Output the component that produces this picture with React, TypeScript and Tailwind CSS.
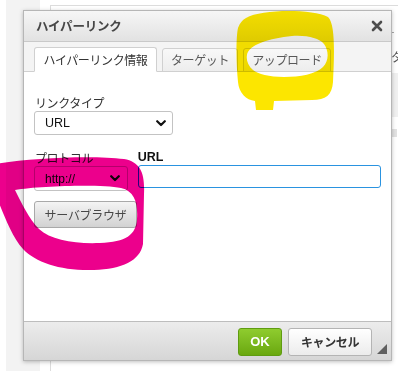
function Chevron() {
  return (
    <svg width="10" height="7" viewBox="0 0 10 7" className="shrink-0">
      <path d="M1.2 1.2 L5 5 L8.8 1.2" fill="none" stroke="#111" strokeWidth="2.2" strokeLinecap="round" strokeLinejoin="round" />
    </svg>
  );
}

function Annotations() {
  return (
    <svg
      width="398"
      height="371"
      viewBox="0 0 398 371"
      className="absolute left-0 top-0 pointer-events-none mix-blend-multiply"
    >
      {/* yellow loop round the upload tab */}
      <path
        fillRule="evenodd"
        fill="#fce600"
        d="M246 18 C262 9 312 9 328 17 C336 24 334 60 333 82 C332 95 326 100 312 100 L274 101 L273 110 L256 110 L255 101 C246 100 239 93 238 82 C236 64 236 36 238 28 C240 23 242 20 246 18 Z
           M247 55 C248 45 270 38 292 36 C307 35 319 38 324 44 C329 51 329 61 323 67 C316 74 300 77 284 77 C269 77 258 74 253 70 C248 66 246 60 247 55 Z"
      />
      {/* magenta loop round protocol / browse */}
      <path
        fillRule="evenodd"
        fill="#ec008c"
        d="M-4 164 C28 158 92 155 124 159 C141 162 145 174 144 194 L143 244 C140 261 122 269 94 270 C62 271 36 263 23 249 C11 236 3 212 -4 196 Z
           M15 190 C40 186 100 184 121 188 C135 191 138 204 137 219 C136 235 126 242 100 243 C74 244 51 240 39 229 C29 219 21 202 15 190 Z"
      />
    </svg>
  );
}

export default function App() {
  return (
    <div className="relative w-[398px] h-[371px] overflow-hidden bg-white" style={{ fontFamily: '"Noto Sans CJK JP", "Noto Sans", sans-serif' }}>
      {/* page behind the dialog */}
      <div className="flex h-full">
        <div className="w-[6px] bg-white" />
        <div className="w-[34px] bg-[#f3f3f3]" />
        <div className="flex-1 pl-[10px] pt-[5px]">
          <div className="h-full border-l border-t border-[#dcdcdc] flex justify-end">
            <div className="w-[7px] flex flex-col">
              <div className="h-[20px]" />
              <div className="text-[10px] leading-[10px] text-[#888]">-</div>
              <div className="mt-[14px] text-[12px] leading-[14px] text-[#555]">タ</div>
              <div className="mt-[9px] h-[44px] bg-[#f0f0f0]" />
              <div className="mt-[12px] w-[6px] h-[8px] bg-[#e2e2e2]" />
            </div>
          </div>
        </div>
      </div>

      {/* dialog */}
      <div className="absolute left-[23px] top-[10px] w-[369px] h-[351px] flex flex-col border border-[#b6b6b6] bg-white shadow-[0_1px_4px_rgba(0,0,0,0.25)]">
        <div className="h-[31px] shrink-0 flex items-center justify-between pl-[12px] pr-[8px] bg-gradient-to-b from-[#f6f6f6] to-[#e2e2e2] border-b border-[#c9c9c9]">
          <span className="text-[12.5px] font-bold text-[#474747] tracking-[-0.2px]">ハイパーリンク</span>
          <svg width="12" height="12" viewBox="0 0 12 12">
            <path d="M2 2 L10 10 M10 2 L2 10" stroke="#4d4d4d" strokeWidth="2.6" strokeLinecap="round" />
          </svg>
        </div>

        <div className="h-[30px] shrink-0 flex items-end gap-[5px] pl-[10px] bg-[#f4f4f4] border-b border-[#d0d0d0]">
          <div className="w-[123px] h-[25px] -mb-px flex items-center justify-center bg-white border border-b-white border-[#d0d0d0] rounded-t-[3px] text-[12px] text-[#333] tracking-[-0.4px]">
            ハイパーリンク情報
          </div>
          <div className="w-[76px] h-[24px] -mb-px flex items-center justify-center bg-gradient-to-b from-[#f8f8f8] to-[#ededed] border border-[#d0d0d0] rounded-t-[3px] text-[12px] text-[#595959] tracking-[-0.4px]">
            ターゲット
          </div>
          <div className="w-[88px] h-[24px] -mb-px flex items-center justify-center bg-gradient-to-b from-[#f8f8f8] to-[#ededed] border border-[#d0d0d0] rounded-t-[3px] text-[12px] text-[#595959] tracking-[-0.4px]">
            アップロード
          </div>
        </div>

        <div className="flex-1 flex flex-col pt-[22px] px-[10px]">
          <div className="pl-[1px] h-[17px] leading-[17px] text-[12px] text-[#333] tracking-[-0.4px]">リンクタイプ</div>
          <div className="w-[139px] h-[24px] flex items-center justify-between pl-[10px] pr-[6px] border border-[#c3c3c3] rounded-[3px] bg-white">
            <span className="text-[12.5px] text-[#111]" style={{ fontFamily: '"Liberation Sans", Arial, sans-serif' }}>URL</span>
            <Chevron />
          </div>

          <div className="flex gap-[10px] mt-[15px]">
            <div className="w-[94px] flex flex-col">
              <div className="pl-[1px] h-[16px] leading-[16px] text-[12px] text-[#333] tracking-[-0.4px]">プロトコル</div>
              <div className="h-[25px] flex items-center justify-between pl-[10px] pr-[7px] border border-[#c3c3c3] rounded-[3px] bg-white">
                <span className="text-[12px] text-[#111]" style={{ fontFamily: '"Liberation Sans", Arial, sans-serif' }}>http://</span>
                <Chevron />
              </div>
            </div>
            <div className="w-[244px] flex flex-col">
              <div className="h-[15px] leading-[15px] text-[12.5px] font-bold text-[#111]" style={{ fontFamily: '"Liberation Sans", Arial, sans-serif' }}>URL</div>
              <div className="h-[23px] border border-[#2a93e0] rounded-[3px] bg-white" />
            </div>
          </div>

          <div className="mt-[10px] w-[103px] h-[27px] flex items-center justify-center border border-[#a9a9a9] rounded-[3px] bg-gradient-to-b from-[#f4f4f4] to-[#d2d2d2] text-[12px] text-[#474747] tracking-[-0.3px]">
            サーバブラウザ
          </div>
        </div>

        <div className="relative h-[39px] shrink-0 flex items-center justify-end gap-[6px] pr-[19px] pt-[1px] border-t border-[#bdbdbd] bg-gradient-to-b from-[#ececec] to-[#d6d6d6]">
          <div className="w-[44px] h-[28px] flex items-center justify-center rounded-[3px] border border-[#5f9c10] bg-gradient-to-b from-[#8fcc2e] to-[#6aa80e] text-[13px] font-bold text-white" style={{ fontFamily: '"Liberation Sans", Arial, sans-serif' }}>
            OK
          </div>
          <div className="w-[84px] h-[28px] flex items-center justify-center rounded-[3px] border border-[#b4b4b4] bg-gradient-to-b from-[#ffffff] to-[#ececec] text-[12px] font-bold text-[#333] tracking-[-0.4px]">
            キャンセル
          </div>
          <svg width="10" height="10" viewBox="0 0 10 10" className="absolute right-[4px] bottom-[6px]">
            <path d="M10 0 L10 10 L0 10 Z" fill="#5f5f5f" />
          </svg>
        </div>
      </div>

      <Annotations />
    </div>
  );
}
